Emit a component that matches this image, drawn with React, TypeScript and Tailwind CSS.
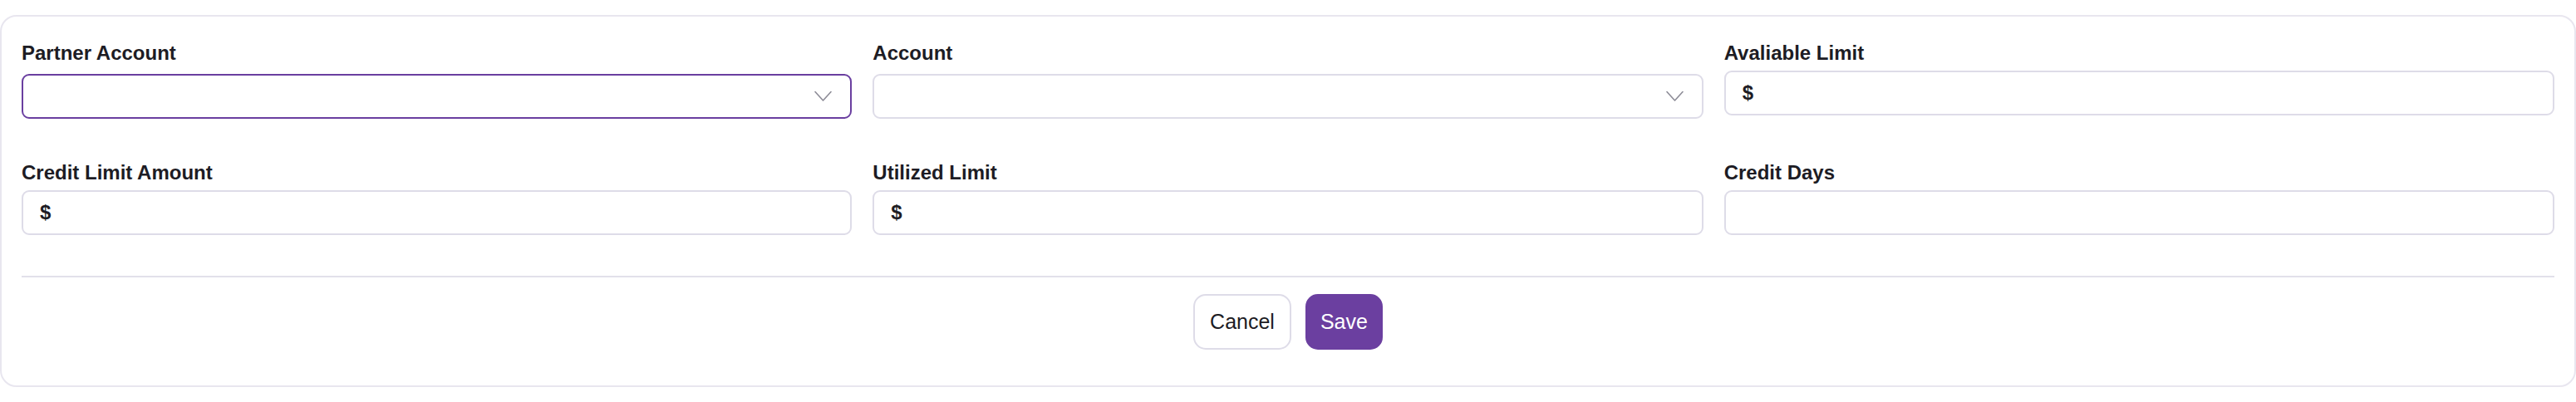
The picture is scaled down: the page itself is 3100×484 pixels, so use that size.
import React from "react";

const font = { fontFamily: '"Liberation Sans", Arial, sans-serif' };

function Label({ children }: { children: React.ReactNode }) {
  return (
    <div className="text-[24px] font-bold leading-[28px] text-[#1d1c24]">{children}</div>
  );
}

function Chevron() {
  return (
    <svg width="21" height="14" viewBox="0 0 21 14" fill="none" className="shrink-0">
      <polyline points="1,1.5 10.5,12 20,1.5" stroke="#8d8c97" strokeWidth="1.6" strokeLinecap="round" strokeLinejoin="round" />
    </svg>
  );
}

function SelectField({ label, active }: { label: string; active?: boolean }) {
  return (
    <div className="flex flex-col">
      <Label>{label}</Label>
      <div
        className={
          active
            ? "mt-[11px] h-[54px] rounded-[9px] border-2 border-[#6a3fa0] bg-white flex items-center justify-end pr-[22px]"
            : "mt-[11px] h-[54px] rounded-[9px] border-2 border-[#dedce8] bg-white flex items-center justify-end pr-[22px]"
        }
      >
        <Chevron />
      </div>
    </div>
  );
}

function InputField({ label, dollar }: { label: string; dollar?: boolean }) {
  return (
    <div className="flex flex-col">
      <Label>{label}</Label>
      <div className="mt-[7px] h-[54px] rounded-[9px] border-2 border-[#dedce8] bg-white flex items-center pl-[20px]">
        {dollar ? <span className="text-[24px] font-bold text-[#1d1c24] leading-none">$</span> : null}
      </div>
    </div>
  );
}

export default function App() {
  return (
    <div className="w-[3100px] h-[484px] bg-white pt-[18px]" style={font}>
      <div className="w-full rounded-[20px] border-2 border-[#e8e6ef] bg-white px-[24px] pt-[30px] pb-[43px]">
        <div className="grid grid-cols-3 gap-x-[25px] gap-y-[51px] items-start">
          <SelectField label="Partner Account" active />
          <SelectField label="Account" />
          <InputField label="Avaliable Limit" dollar />
          <InputField label="Credit Limit Amount" dollar />
          <InputField label="Utilized Limit" dollar />
          <InputField label="Credit Days" />
        </div>
        <div className="mt-[49px] h-[2px] bg-[#e2e0ea]" />
        <div className="mt-[20px] flex justify-center gap-[17px]">
          <button className="h-[67px] px-[18px] rounded-[15px] border-2 border-[#dedce8] bg-white text-[25px] text-[#1d1c24]">
            Cancel
          </button>
          <button className="h-[67px] px-[18px] rounded-[15px] bg-[#6b3fa0] text-[25px] text-white">
            Save
          </button>
        </div>
      </div>
    </div>
  );
}
